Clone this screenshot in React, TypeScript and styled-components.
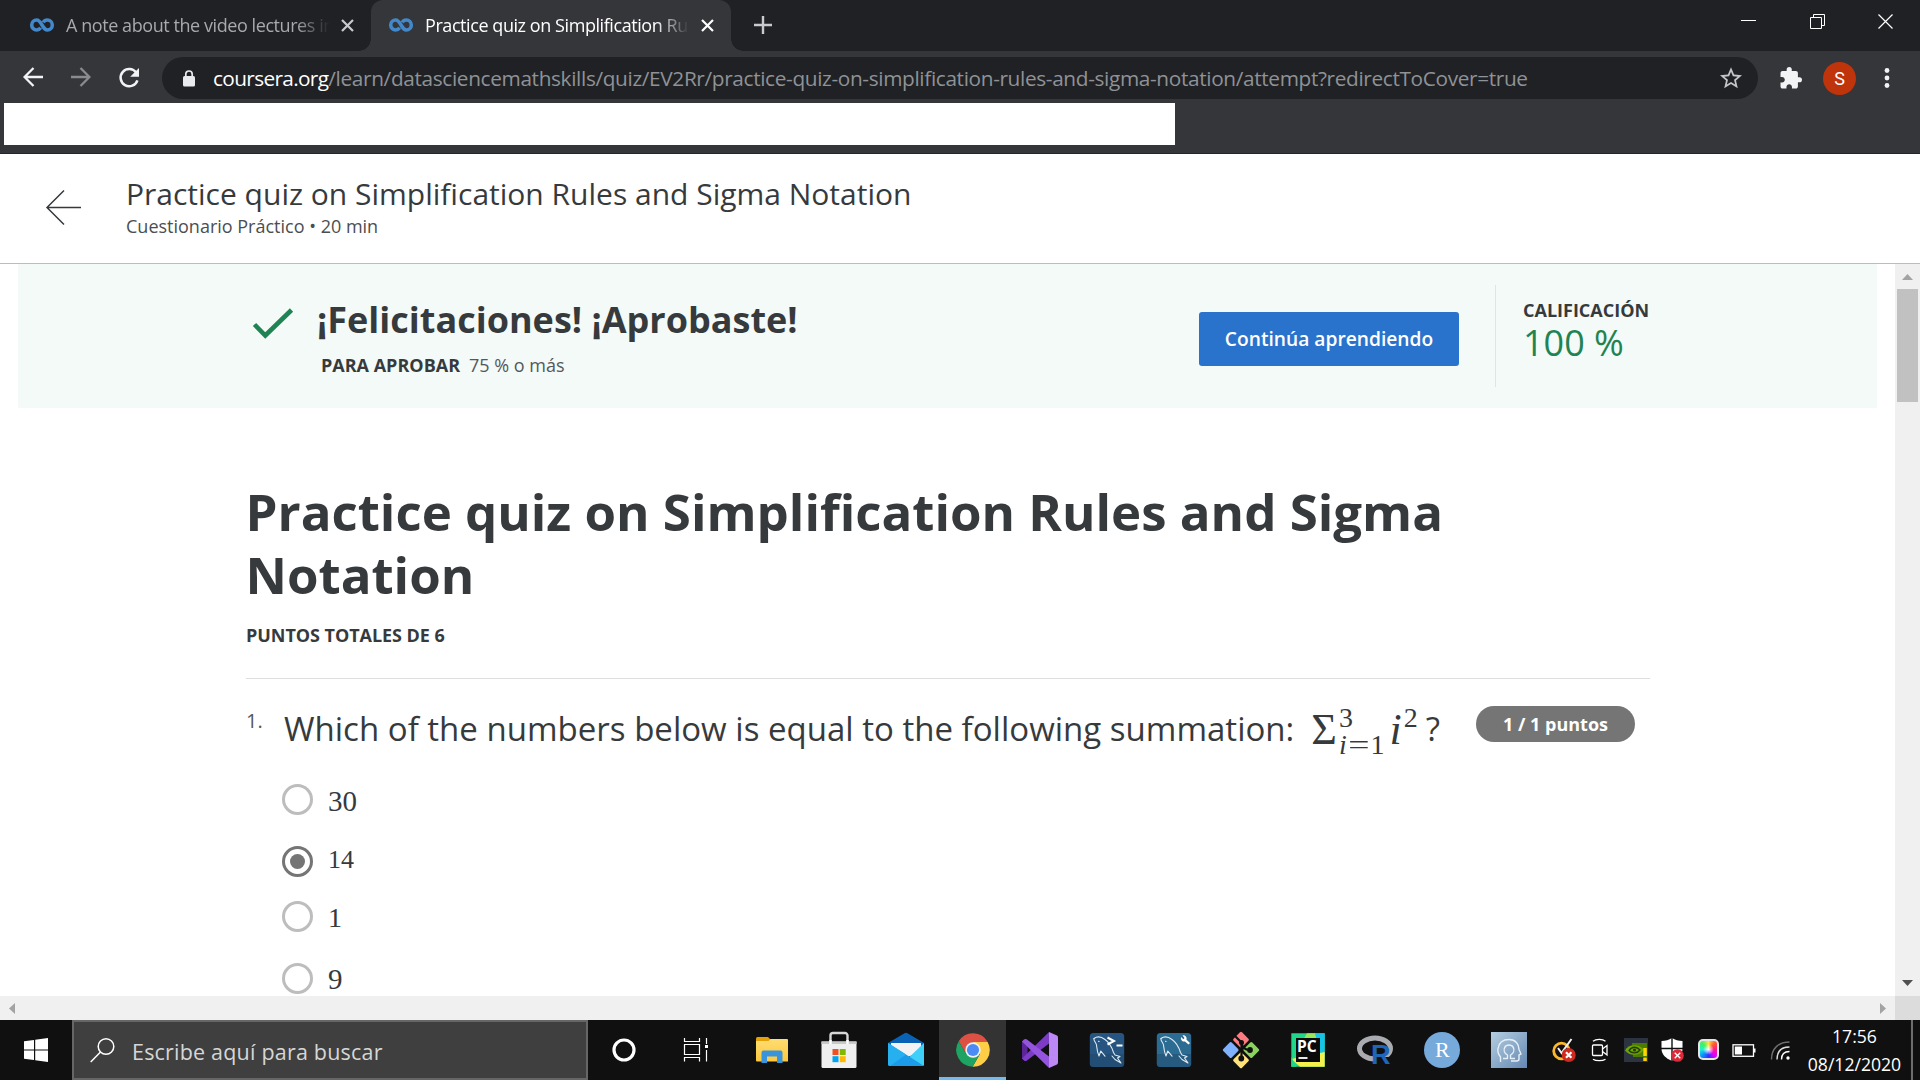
import React from 'react';
import styled, { createGlobalStyle } from 'styled-components';

const ui = "'Open Sans', 'Noto Sans', sans-serif";
const math = "'Liberation Serif', 'Times New Roman', serif";
const ink = '#373a3c';

const GlobalStyle = createGlobalStyle`
  * { box-sizing: border-box; }
  html, body { margin: 0; padding: 0; overflow: hidden; }
  body { font-family: ${ui}; color: ${ink}; background: #fff; }
`;

const Screen = styled.div`
  width: 1920px;
  height: 1080px;
  display: flex;
  flex-direction: column;
  overflow: hidden;
`;

const Icon = styled.svg`
  display: block;
  flex: none;
  overflow: visible;
`;

/* ---------- Browser chrome ---------- */

const Browser = styled.header`
  flex: none;
  height: 154px;
  background: #35363a;
  border-bottom: 1px solid #242528;
`;

const TabStrip = styled.div`
  height: 51px;
  display: flex;
  background: #202124;
`;

const Tab = styled.div<{ $active?: boolean }>`
  position: relative;
  width: ${(p) => (p.$active ? 360 : 371)}px;
  height: 51px;
  padding-left: ${(p) => (p.$active ? 18 : 30)}px;
  padding-right: 17px;
  padding-bottom: 1px;
  display: flex;
  align-items: center;
  border-radius: 12px 12px 0 0;
  color: ${(p) => (p.$active ? '#ffffff' : '#a6a9ad')};
  background: ${(p) => (p.$active ? '#35363a' : 'transparent')};

  &::before,
  &::after {
    content: '';
    display: ${(p) => (p.$active ? 'block' : 'none')};
    position: absolute;
    bottom: 0;
    width: 12px;
    height: 12px;
  }
  &::before {
    left: -12px;
    background: radial-gradient(circle at 0 0, transparent 11.5px, #35363a 12px);
  }
  &::after {
    right: -12px;
    background: radial-gradient(circle at 100% 0, transparent 11.5px, #35363a 12px);
  }
`;

const TabTitle = styled.span`
  width: 266px;
  margin-left: 12px;
  overflow: hidden;
  white-space: nowrap;
  font-size: 18px;
  line-height: 24px;
  letter-spacing: -0.43px;
  mask-image: linear-gradient(to right, #000 230px, transparent 264px);
`;

const TabClose = styled(Icon)`
  margin-left: auto;
`;

const NewTab = styled.div`
  width: 64px;
  padding-bottom: 1px;
  display: flex;
  align-items: center;
  justify-content: center;
`;

const WindowControls = styled.div`
  margin-left: auto;
  height: 43px;
  display: grid;
  grid-template-columns: repeat(3, 68.5px);
  align-items: center;
  justify-items: center;
`;

const Toolbar = styled.div`
  height: 52px;
  padding: 6px 23px 4px 23px;
  display: flex;
  align-items: center;
`;

const NavButtons = styled.div`
  width: 139px;
  display: flex;
  gap: 28px;
`;

const Omnibox = styled.div`
  width: 1596px;
  height: 42px;
  padding: 0 16px 0 21px;
  display: flex;
  align-items: center;
  border-radius: 21px;
  background: #202124;
`;

const Url = styled.span`
  flex: 1;
  margin-left: 18px;
  font-size: 20.8px;
  line-height: 28px;
  letter-spacing: -0.35px;
  white-space: nowrap;
  color: #8f9296;
`;

const Host = styled.span`
  color: #fff;
  letter-spacing: -0.65px;
`;

const ToolbarActions = styled.div`
  flex: 1;
  display: flex;
  align-items: center;
  padding-left: 22px;
`;

const Avatar = styled.div`
  width: 33px;
  height: 33px;
  margin: 0 28px 0 21px;
  display: flex;
  align-items: center;
  justify-content: center;
  border-radius: 50%;
  background: #c0340c;
  color: #fff;
  font: 18px Roboto, sans-serif;
`;

const BlankBar = styled.div`
  width: 1171px;
  height: 42px;
  margin-left: 4px;
  background: #fff;
`;

/* ---------- Quiz page ---------- */

const QuizHeader = styled.div`
  flex: none;
  height: 110px;
  padding: 19px 0 0 46px;
  display: flex;
  border-bottom: 1px solid #b9bdbb;
`;

const BackArrow = styled(Icon)`
  margin-top: 17px;
`;

const HeaderText = styled.div`
  margin-left: 45px;
`;

const HeaderTitle = styled.div`
  font-size: 30px;
  line-height: 41px;
`;

const HeaderMeta = styled.div`
  font-size: 18px;
  line-height: 24px;
  color: #4b4e50;
`;

const Viewport = styled.div`
  flex: none;
  height: 732px;
  display: flex;
`;

const Page = styled.main`
  width: 1895px;
  overflow: hidden;
`;

const Banner = styled.section`
  height: 144px;
  margin: 0 18px;
  padding-left: 234px;
  display: flex;
  background: #f3faf8;
`;

const BannerCheck = styled(Icon)`
  margin-top: 43px;
`;

const BannerCopy = styled.div`
  width: 905px;
  padding: 31px 0 0 23px;
`;

const Congrats = styled.h2`
  margin: 0;
  font-size: 36px;
  font-weight: 700;
  line-height: 50px;
`;

const PassLine = styled.p`
  margin: 8px 0 0 4px;
  display: flex;
  gap: 9px;
  font-size: 18px;
  line-height: 24px;
  color: #55585a;
`;

const Label = styled.span`
  font-size: 18px;
  font-weight: 700;
  line-height: 24px;
  color: ${ink};
`;

const ContinueButton = styled.button`
  width: 260px;
  height: 54px;
  margin: 48px 36px 0 0;
  padding: 0;
  border: 0;
  border-radius: 3px;
  background: #2a73cc;
  color: #fff;
  font: 600 19.2px/54px ${ui};
`;

const Grade = styled.div`
  height: 102px;
  margin-top: 21px;
  padding: 13px 0 0 27px;
  display: flex;
  flex-direction: column;
  border-left: 1px solid #dfe5e3;
`;

const GradeValue = styled.span`
  font-size: 36px;
  line-height: 42px;
  color: #1f8354;
`;

const Quiz = styled.section`
  width: 1650px;
  padding: 72px 0 0 246px;
`;

const QuizTitle = styled.h1`
  margin: 0 0 17px -0.5px;
  width: 1300px;
  font-size: 51px;
  font-weight: 700;
  line-height: 63px;
`;

const TotalPoints = styled.div`
  height: 55px;
  letter-spacing: -0.05px;
`;

const Question = styled.div`
  height: 106px;
  padding: 27px 15px 0 0;
  display: flex;
  align-items: flex-start;
  border-top: 1px solid #dedede;
`;

const QuestionNumber = styled.span`
  width: 38px;
  padding-top: 1px;
  font-size: 20px;
  line-height: 28px;
  color: #55585a;
`;

const Prompt = styled.span`
  font-size: 33.04px;
  line-height: 46px;
  white-space: nowrap;
`;

const Formula = styled.span`
  height: 46px;
  margin: 0 7px 0 17px;
  display: flex;
  align-items: flex-start;
  font-family: ${math};
`;

const Symbol = styled.span<{ $italic?: boolean }>`
  padding-top: 1px;
  font-size: 44px;
  line-height: 46px;
  font-style: ${(p) => (p.$italic ? 'italic' : 'normal')};
`;

const Scripts = styled.span<{ $gap: number }>`
  margin: -2px ${(p) => p.$gap}px 0 2px;
  display: flex;
  flex-direction: column;
  font-size: 28px;
  line-height: 27px;
`;

const Lower = styled.span`
  display: flex;
  align-items: baseline;
`;

const Equals = styled.span`
  margin: 0 4px;
  display: inline-block;
  transform: scaleX(1.35);
`;

const PointsPill = styled.span`
  width: 159px;
  height: 36px;
  margin: 0 0 0 auto;
  border-radius: 18px;
  background: #757575;
  color: #fff;
  font-size: 18px;
  font-weight: 700;
  line-height: 37px;
  text-align: center;
`;

const Options = styled.div`
  padding-left: 36px;
`;

const Option = styled.label<{ $gap: number }>`
  height: 31px;
  margin-bottom: ${(p) => p.$gap}px;
  display: flex;
  align-items: center;
  gap: 15px;
`;

const Radio = styled.span<{ $on?: boolean }>`
  width: 31px;
  height: 31px;
  display: flex;
  align-items: center;
  justify-content: center;
  border: 3px solid ${(p) => (p.$on ? '#757575' : '#bdbdbd')};
  border-radius: 50%;

  &::after {
    content: '';
    width: 15px;
    height: 15px;
    border-radius: 50%;
    background: ${(p) => (p.$on ? '#757575' : 'transparent')};
  }
`;

const Answer = styled.span<{ $size: number; $shift: number }>`
  padding-top: ${(p) => Math.max(0, p.$shift)}px;
  padding-bottom: ${(p) => Math.max(0, -p.$shift)}px;
  font-family: ${math};
  font-size: ${(p) => p.$size}px;
  line-height: 30px;
`;

/* ---------- Scrollbars ---------- */

const VerticalBar = styled.div`
  width: 25px;
  padding: 10px 0;
  display: flex;
  flex-direction: column;
  align-items: center;
  justify-content: space-between;
  background: #f0f0f0;
`;

const ThumbGroup = styled.div`
  display: flex;
  flex-direction: column;
  align-items: center;
  gap: 9px;
`;

const Thumb = styled.div`
  width: 21px;
  height: 113px;
  background: #c1c1c1;
`;

const HorizontalBar = styled.div`
  flex: none;
  height: 24px;
  padding-left: 9px;
  display: flex;
  align-items: center;
  background: #f0f0f0;
`;

const BarCorner = styled.div`
  width: 25px;
  height: 24px;
  margin-left: 9px;
  background: #dcdcdc;
`;

const ScrollRight = styled(Icon)`
  margin-left: auto;
`;

/* ---------- Taskbar ---------- */

const Taskbar = styled.footer`
  flex: none;
  height: 60px;
  display: flex;
  background: #101010;
`;

const Slot = styled.div<{ $width: number; $active?: boolean }>`
  width: ${(p) => p.$width}px;
  height: 60px;
  flex: none;
  display: flex;
  align-items: center;
  justify-content: center;
  background: ${(p) => (p.$active ? '#333333' : 'transparent')};
  box-shadow: ${(p) => (p.$active ? 'inset 0 -3px #76b9ed' : 'none')};
`;

const AppRow = styled.div`
  margin-left: 7px;
  display: flex;
`;

const SearchBox = styled.div`
  width: 516px;
  height: 60px;
  padding: 0 0 0 16px;
  display: flex;
  align-items: center;
  gap: 17px;
  border: 2px solid #666;
  background: #3f3f3f;
  color: #d6d6d6;
  font-size: 21.5px;
  letter-spacing: 0.2px;
  white-space: nowrap;
`;

const SearchHint = styled.span`
  padding-top: 3px;
`;

const Tray = styled.div`
  margin-left: 4px;
  display: flex;
`;

const Clock = styled.div`
  width: 113px;
  padding-top: 2px;
  text-align: center;
  color: #fff;
  font-size: 17.6px;
  line-height: 28px;
`;

const ShowDesktop = styled.div`
  width: 8px;
  border-left: 2px solid #6d6d6d;
`;

/* ---------- Icons ---------- */

const Coursera = () => (
  <Icon width="24" height="14" viewBox="0 0 24 14">
    <path
      d="M10.6 9.8C9.6 11.3 8.3 12 6.7 12a5 5 0 1 1 0-10c4.8 0 5.8 10 10.6 10a5 5 0 1 0 0-10c-1.8 0-3.2.9-4 2.3"
      fill="none" stroke="#4288ca" strokeWidth="3.6"
    />
  </Icon>
);

const Cross = ({ color }: { color: string }) => (
  <TabClose width="13" height="13" viewBox="0 0 13 13">
    <path d="M1 1l11 11M12 1L1 12" stroke={color} strokeWidth="2.2" />
  </TabClose>
);

const Arrow = ({ dir, color }: { dir: 'left' | 'right'; color: string }) => (
  <Icon width="20" height="20" viewBox="0 0 20 20">
    <path
      d={dir === 'left' ? 'M20 10H2M10.5 1L1.6 10l8.9 9' : 'M0 10h18M9.5 1l8.9 9-8.9 9'}
      fill="none" stroke={color} strokeWidth="2.3"
    />
  </Icon>
);

const Reload = () => (
  <Icon width="22" height="22" viewBox="1 0 22 22">
    <path d="M18.2 5.6A8.6 8.6 0 1 0 19.4 13.3" fill="none" stroke="#f1f3f4" strokeWidth="2.5" />
    <path d="M21 1v8.8h-8.8z" fill="#f1f3f4" />
  </Icon>
);

const Lock = () => (
  <Icon width="12" height="17" viewBox="0 0 12 17">
    <rect y="6" width="12" height="10.5" rx="1.5" fill="#e8eaed" />
    <path d="M2.8 7V4.2a3.2 3.2 0 0 1 6.4 0V7" fill="none" stroke="#e8eaed" strokeWidth="1.7" />
  </Icon>
);

const Star = () => (
  <Icon width="22" height="22" viewBox="2 2 20 19.5">
    <path
      fill="#c4c7ca"
      d="M22 9.24l-7.19-.62L12 2 9.19 8.63 2 9.24l5.46 4.73L5.82 21 12 17.27 18.18 21l-1.63-7.03L22 9.24zM12 15.4l-3.76 2.27 1-4.28-3.32-2.88 4.38-.38L12 6.1l1.71 4.04 4.38.38-3.32 2.88 1 4.28L12 15.4z"
    />
  </Icon>
);

const Puzzle = () => (
  <Icon width="22" height="22" viewBox="1.5 1 21.5 21.5">
    <path
      fill="#f1f3f4"
      d="M20.5 11H19V7c0-1.1-.9-2-2-2h-4V3.5a2.5 2.5 0 0 0-5 0V5H4c-1.1 0-1.99.9-1.99 2v3.8H3.5c1.49 0 2.7 1.21 2.7 2.7s-1.21 2.7-2.7 2.7H2V20c0 1.1.9 2 2 2h3.8v-1.5c0-1.49 1.21-2.7 2.7-2.7s2.7 1.21 2.7 2.7V22H17c1.1 0 2-.9 2-2v-4h1.5a2.5 2.5 0 0 0 0-5z"
    />
  </Icon>
);

const Dots = () => (
  <Icon width="6" height="20" viewBox="0 0 6 20">
    {[2.5, 10, 17.5].map((y) => <circle key={y} cx="3" cy={y} r="2.4" fill="#f1f3f4" />)}
  </Icon>
);

const Triangle = ({ points, color, w, h }: { points: string; color: string; w: number; h: number }) => (
  <Icon width={w} height={h} viewBox={`0 0 ${w} ${h}`}><polygon points={points} fill={color} /></Icon>
);

const App36 = ({ children }: { children: React.ReactNode }) => (
  <Icon width="36" height="36" viewBox="0 0 36 36">{children}</Icon>
);

const Explorer = () => (
  <App36>
    <path d="M2 6.5A1.5 1.5 0 0 1 3.5 5H14l2.5 2.5V12H2z" fill="#e2a10a" />
    <path d="M2 9h12.500l2-2H33a1 1 0 0 1 1 1v21.500H3a1 1 0 0 1-1-1z" fill="url(#folder)" />
    <path d="M7.500 31V20.500a2 2 0 0 1 2-2h17a2 2 0 0 1 2 2V31h-5.500v-6.500H13V31z" fill="#3a94dc" />
    <defs>
      <linearGradient id="folder" x2="0" y2="1">
        <stop stopColor="#ffdd72" /><stop offset="1" stopColor="#fdc83d" />
      </linearGradient>
    </defs>
  </App36>
);

const Store = () => (
  <App36>
    <path d="M9.500 12V3.500A2.500 2.500 0 0 1 12 1h12a2.500 2.500 0 0 1 2.500 2.500V12" fill="none" stroke="#d8d8d8" strokeWidth="2.4" />
    <path d="M.5 9.500h35V34.500a1.500 1.500 0 0 1-1.500 1.500H2a1.500 1.500 0 0 1-1.500-1.500z" fill="#f0f0f0" />
    <path d="M.5 9.500h35v2.500H.5z" fill="#c9c9c9" />
    <path d="M9.500 8v4M26.500 8v4" stroke="#fff" strokeWidth="2.4" />
    <path d="M11.500 17h6v6h-6z" fill="#f25022" />
    <path d="M18.700 17h6v6h-6z" fill="#7fba00" />
    <path d="M11.500 24.200h6v6h-6z" fill="#00a4ef" />
    <path d="M18.700 24.200h6v6h-6z" fill="#ffb900" />
  </App36>
);

const Mail = () => (
  <App36>
    <path d="M0 11L16.500 1.300a3 3 0 0 1 3 0L36 11v8H0z" fill="#0a62b5" />
    <path d="M3 11h30v8L18 26 3 19z" fill="#f3f3f3" />
    <path d="M36 11v21.500a1.500 1.500 0 0 1-1.500 1.500H12z" fill="#3fd0fa" />
    <path d="M0 11l36 23H1.500A1.500 1.500 0 0 1 0 32.500z" fill="#1c9ce8" />
    <path d="M0 11l18 11.500L2 34 0 32.500z" fill="#27b0f0" />
  </App36>
);

const Chrome = () => (
  <App36>
    <path d="M3.740 9.300A16.700 16.700 0 0 1 32.660 10L18 10 11.070 22z" fill="#dd5144" />
    <path d="M32.660 10A16.700 16.700 0 0 1 17.600 34.700L24.930 22 18 10z" fill="#ffcd46" />
    <path d="M17.600 34.700A16.700 16.700 0 0 1 3.740 9.300L11.070 22h13.860z" fill="#1da362" />
    <circle cx="18" cy="18" r="7.7" fill="#f1f1f1" />
    <circle cx="18" cy="18" r="6.1" fill="#4c8bf5" />
  </App36>
);

const VisualStudio = () => (
  <App36>
    <path d="M0 9.500L3.500 7l2 1.500v19L3.500 29 0 26.500z" fill="#5c2699" />
    <path d="M27 0v11.500L5 28.500q-1.500 1-3 0L0 26.500z" fill="#7c3cc6" />
    <path d="M2 7.500q1.500-1 3 0L27 24.500V36L0 9.500z" fill="#9554dd" />
    <path d="M27 0l8 3.500q1 .6 1 2v25q0 1.400-1 2L27 36z" fill="#bb88f4" />
  </App36>
);

const MySql = ({ kind }: { kind: 'shell' | 'workbench' }) => (
  <App36>
    <rect x=".8" y="1" width="34.4" height="34" rx="3.5" fill={kind === 'shell' ? '#265582' : '#2c6b92'} />
    <path d="M1 22h34v10a3 3 0 0 1-3 3H4a3 3 0 0 1-3-3z" fill="#1c3f5c" opacity=".35" />
    <g fill="none" stroke="#dfeaf2" strokeWidth="1.1" strokeLinejoin="round" strokeLinecap="round">
      <path d="M5 6.500C8 4.300 12 4.500 16 7.500c5 3.500 7 8 8.500 13l1.500 2.500 5 1.500-2.500 1.500 3.500 5-6-3.500-3-3.500" />
      <path d="M5 6.500c-.8 2 2 4 2.500 6.500.4 3 .6 7 2.500 11l1.800-5 4.200 5.200" />
      <path d="M9.500 9.200l.6.300" />
    </g>
    {kind === 'shell' ? (
      <path d="M18.500 5.500l6.500 3.500-6.500 3.500M27.500 13.500h6" fill="none" stroke="#fff" strokeWidth="2" />
    ) : (
      <path d="M25 5a3.500 3.500 0 0 0 4 4.500l3.500 3 1.500-1.500-3.500-3.200A3.300 3.300 0 0 0 26.500 3.500l2 2.500-1 1.300z" fill="#fff" />
    )}
  </App36>
);

const Git = () => (
  <App36>
    <rect x="12" y="1.7" width="12" height="12" rx="1.5" transform="rotate(45 18 7.7)" fill="#ff7b80" />
    <rect x="1.7" y="12" width="12" height="12" rx="1.5" transform="rotate(45 7.7 18)" fill="#7fb1ff" />
    <rect x="22.3" y="12" width="12" height="12" rx="1.5" transform="rotate(45 28.3 18)" fill="#8bd35f" />
    <rect x="12" y="22.3" width="12" height="12" rx="1.5" transform="rotate(45 18 28.3)" fill="#ffe27a" />
    <path d="M11.500 3.500l7 7V26M18.500 10.500c.5 5 3.500 7.500 8.500 7.500" fill="none" stroke="#101010" strokeWidth="2.2" />
    <circle cx="18.5" cy="10.5" r="2.5" fill="#101010" />
    <circle cx="27" cy="18" r="2.9" fill="#101010" />
    <circle cx="18.3" cy="26.5" r="2.9" fill="#101010" />
  </App36>
);

const PyText = styled.text`
  font: 700 15.5px 'Open Sans', sans-serif;
  fill: #fff;
`;

const PyCharm = () => (
  <App36>
    <path d="M1.300 1.300h33.400v33.400H1.300z" fill="#21d789" />
    <path d="M24 1.300h10.700V26L24 12z" fill="#17c4e8" />
    <path d="M17 1.300h8l1.500 6-14 2z" fill="#9be85f" />
    <path d="M34.700 20v14.700H10L1.300 27z" fill="#f5f04a" />
    <path d="M1.300 25l5 9.700h-5z" fill="#21d789" />
    <path d="M6 6h24v24H6z" fill="#0a0a0a" />
    <PyText x="7" y="19.5">PC</PyText>
    <path d="M8.500 25h9v2h-9z" fill="#e8e8e8" />
  </App36>
);

const RText = styled.text<{ $serif?: boolean }>`
  font: ${(p) => (p.$serif ? "22px 'Liberation Serif', serif" : "700 27px 'Liberation Sans', sans-serif")};
  fill: ${(p) => (p.$serif ? '#fff' : '#1f66b9')};
`;

const RLogo = () => (
  <App36>
    <ellipse cx="18" cy="16.5" rx="15.5" ry="10.5" fill="none" stroke="#a9abb0" strokeWidth="5" />
    <path d="M19 29l-2-4h18v9H19z" fill="#101010" />
    <RText x="14" y="31.5">R</RText>
  </App36>
);

const RStudio = () => (
  <App36>
    <circle cx="18" cy="18" r="18" fill="#75aadb" />
    <RText $serif x="11" y="25">R</RText>
  </App36>
);

const HeadApp = () => (
  <App36>
    <defs>
      <linearGradient id="head" x2="1" y2="1">
        <stop stopColor="#b4cee0" /><stop offset="1" stopColor="#6588b2" />
      </linearGradient>
    </defs>
    <path d="M0 0h36v36H0z" fill="url(#head)" />
    <g fill="none" stroke="#e6f0f8" strokeWidth="1.4" strokeLinejoin="round">
      <path d="M9.500 30v-5C7 22 6.500 19.500 7 16.500 8 10.500 12.500 7.500 18 7.500c6.500 0 10 4.500 10 10l2 4.500-2 .8V27c0 1.500-1 2-2.500 2H20" />
      <path d="M12 26.500h4.500V23c-3-1.600-4.200-4.800-2.800-7.600 1.700-3.200 6.900-3.200 8.600 0 1.400 2.800.2 6-2.800 7.600v3.500H24" />
    </g>
  </App36>
);

const Norton = () => (
  <Icon width="24" height="24" viewBox="0 0 24 24">
    <circle cx="9.5" cy="13" r="7.8" fill="none" stroke="#fcb72b" strokeWidth="2.8" />
    <path d="M6 10l3.500 5L19.500 1" fill="none" stroke="#f2f2f2" strokeWidth="2" />
    <circle cx="16.7" cy="17" r="7" fill="#cf2a20" />
    <path d="M14 14.300l5.400 5.400M19.400 14.300L14 19.700" stroke="#fff" strokeWidth="2.2" />
  </Icon>
);

const Camera = () => (
  <Icon width="24" height="24" viewBox="0 0 24 24">
    <g fill="none" stroke="#fff" strokeWidth="1.3">
      <rect x="4.5" y="7" width="10" height="10.5" rx="1" />
      <path d="M14.500 11l4.500-3.500v9.500l-4.500-3.500M5 3.200C8 .7 14.500.7 17.500 3.200M5 21.200c3 2 9.500 2 12.500 0" />
    </g>
  </Icon>
);

const Nvidia = () => (
  <Icon width="24" height="24" viewBox="0 0 24 24">
    <path d="M0 0h24v24H0z" fill="#2b3440" />
    <path d="M8 5h15v14H9z" fill="#4d7a00" />
    <path d="M1 12.500C4 6.500 14 5 20 12c-5 6.500-15 6-19 .5z" fill="#6aa800" />
    <path d="M5 12.500c3-4.500 8-4 11-.5-2.500 3.500-8 4-11 .5z" fill="none" stroke="#27380a" strokeWidth="1.3" />
    <circle cx="10.5" cy="12" r="1.5" fill="#27380a" />
    <path d="M19.300 10h3.500v8h-3.500zM19.300 19.500h3.500V23h-3.500z" fill="#ffd500" />
  </Icon>
);

const Shield = () => (
  <Icon width="24" height="24" viewBox="0 0 24 24">
    <path d="M12 0c3 2 6.500 3 10.500 3v7.500c0 6-4 9.500-10.500 12.500C5.500 20 1.500 16.500 1.500 10.500V3C5.500 3 9 2 12 0z" fill="#fff" />
    <path d="M12 0v23M1 10.500h22" stroke="#101010" strokeWidth="1.4" />
    <circle cx="17.5" cy="17.5" r="6.3" fill="#d92b3a" />
    <path d="M14.700 14.700l5.600 5.600M20.300 14.700l-5.600 5.600" stroke="#fff" strokeWidth="1.3" />
  </Icon>
);

const Swatch = styled.div`
  width: 21px;
  height: 21px;
  margin-top: -2px;
  border: 2px solid #e4e4e4;
  border-radius: 5px;
  background:
    radial-gradient(circle at 50% 50%, #fff 0, transparent 45%),
    conic-gradient(from 0deg, #ffe14a, #ff5a30, #ff1a8c, #e000ff, #3030ff, #1090ff, #20f0d0, #40f060, #ffe14a);
`;

const Battery = () => (
  <Icon width="24" height="24" viewBox="0 0 24 24">
    <rect x="1" y="6.8" width="20.5" height="11.5" fill="none" stroke="#fff" strokeWidth="1.3" />
    <path d="M2.800 8.500H10v8H2.800zM22 10.500h1.500v4H22z" fill="#fff" />
  </Icon>
);

const Wifi = () => (
  <Icon width="24" height="24" viewBox="0 0 24 24">
    <circle cx="20" cy="20" r="1.7" fill="#fff" />
    <g fill="none" strokeWidth="1.4">
      <path d="M13.500 21.500c0-5 3-8 8-8" stroke="#fff" />
      <path d="M9 21.500C9 13.500 13.500 9 21.500 9" stroke="#ddd" />
      <path d="M3.500 21.500C3.500 10.500 10.500 4 21.500 4" stroke="#707070" />
    </g>
  </Icon>
);

const options = [
  { text: '30', size: 29, shift: 2, gap: 31 },
  { text: '14', size: 26, shift: -4, gap: 24 },
  { text: '1', size: 28, shift: 3, gap: 31 },
  { text: '9', size: 29, shift: 1, gap: 0 },
];

const apps = [
  <Explorer />, <Store />, <Mail />, <Chrome />, <VisualStudio />, <MySql kind="shell" />,
  <MySql kind="workbench" />, <Git />, <PyCharm />, <RLogo />, <RStudio />, <HeadApp />,
];

const tray = [<Norton />, <Camera />, <Nvidia />, <Shield />, <Swatch />, <Battery />, <Wifi />];

export default function App() {
  return (
    <Screen>
      <GlobalStyle />
      <Browser>
        <TabStrip>
          <Tab>
            <Coursera />
            <TabTitle>A note about the video lectures in</TabTitle>
            <Cross color="#c8cacd" />
          </Tab>
          <Tab $active>
            <Coursera />
            <TabTitle>Practice quiz on Simplification Ru</TabTitle>
            <Cross color="#ffffff" />
          </Tab>
          <NewTab>
            <Icon width="18" height="18" viewBox="0 0 18 18">
              <path d="M9 0v18M0 9h18" stroke="#c8cacd" strokeWidth="2.4" />
            </Icon>
          </NewTab>
          <WindowControls>
            <Icon width="15" height="15" viewBox="0 0 15 15"><path d="M0 6.500h15" stroke="#fff" /></Icon>
            <Icon width="15" height="15" viewBox="0 0 15 15">
              <path d="M.5 3.500h11v11H.5zM3.500 3.500v-3h11v11h-3" fill="none" stroke="#fff" />
            </Icon>
            <Icon width="15" height="15" viewBox="0 0 15 15">
              <path d="M.5.5l14 14M14.500.5l-14 14" stroke="#fff" strokeWidth="1.2" />
            </Icon>
          </WindowControls>
        </TabStrip>
        <Toolbar>
          <NavButtons>
            <Arrow dir="left" color="#f1f3f4" />
            <Arrow dir="right" color="#8a8b8e" />
            <Reload />
          </NavButtons>
          <Omnibox>
            <Lock />
            <Url>
              <Host>coursera.org</Host>
              /learn/datasciencemathskills/quiz/EV2Rr/practice-quiz-on-simplification-rules-and-sigma-notation/attempt?redirectToCover=true
            </Url>
            <Star />
          </Omnibox>
          <ToolbarActions>
            <Puzzle />
            <Avatar>S</Avatar>
            <Dots />
          </ToolbarActions>
        </Toolbar>
        <BlankBar />
      </Browser>

      <QuizHeader>
        <BackArrow width="35" height="35" viewBox="0 0 35 35">
          <path d="M35 17.500H1M18 .5L1 17.500l17 17" fill="none" stroke={ink} strokeWidth="1.5" />
        </BackArrow>
        <HeaderText>
          <HeaderTitle>Practice quiz on Simplification Rules and Sigma Notation</HeaderTitle>
          <HeaderMeta>Cuestionario Práctico • 20 min</HeaderMeta>
        </HeaderText>
      </QuizHeader>

      <Viewport>
        <Page>
          <Banner>
            <BannerCheck width="42" height="32" viewBox="0 0 42 32">
              <path d="M2.500 17.500l10.800 11L39.500 3" fill="none" stroke="#1f8354" strokeWidth="4.6" />
            </BannerCheck>
            <BannerCopy>
              <Congrats>¡Felicitaciones! ¡Aprobaste!</Congrats>
              <PassLine><Label>PARA APROBAR</Label>75 % o más</PassLine>
            </BannerCopy>
            <ContinueButton>Continúa aprendiendo</ContinueButton>
            <Grade>
              <Label>CALIFICACIÓN</Label>
              <GradeValue>100 %</GradeValue>
            </Grade>
          </Banner>
          <Quiz>
            <QuizTitle>Practice quiz on Simplification Rules and Sigma Notation</QuizTitle>
            <TotalPoints><Label>PUNTOS TOTALES DE 6</Label></TotalPoints>
            <Question>
              <QuestionNumber>1.</QuestionNumber>
              <Prompt>Which of the numbers below is equal to the following summation:</Prompt>
              <Formula>
                <Symbol>Σ</Symbol>
                <Scripts $gap={5}><span>3</span><Lower><i>i</i><Equals>=</Equals>1</Lower></Scripts>
                <Symbol $italic>i</Symbol>
                <Scripts $gap={1}><span>2</span></Scripts>
              </Formula>
              <Prompt>?</Prompt>
              <PointsPill>1 / 1 puntos</PointsPill>
            </Question>
            <Options>
              {options.map((o) => (
                <Option key={o.text} $gap={o.gap}>
                  <Radio $on={o.text === '14'} />
                  <Answer $size={o.size} $shift={o.shift}>{o.text}</Answer>
                </Option>
              ))}
            </Options>
          </Quiz>
        </Page>
        <VerticalBar>
          <ThumbGroup>
            <Triangle points="0,6 5.5,0 11,6" color="#a3a3a3" w={11} h={6} />
            <Thumb />
          </ThumbGroup>
          <Triangle points="0,0 11,0 5.5,6" color="#505050" w={11} h={6} />
        </VerticalBar>
      </Viewport>
      <HorizontalBar>
        <Triangle points="6,0 6,11 0,5.5" color="#a3a3a3" w={6} h={11} />
        <ScrollRight width="6" height="11" viewBox="0 0 6 11"><polygon points="0,0 6,5.5 0,11" fill="#a3a3a3" /></ScrollRight>
        <BarCorner />
      </HorizontalBar>

      <Taskbar>
        <Slot $width={72}>
          <Icon width="24" height="24" viewBox="0 0 24 24">
            <path d="M0 3.300l10-1.400v9.500H0zM11.200 1.700L24 0v11.400H11.200zM0 12.600h10v9.500L0 20.700zM11.200 12.600H24V24l-12.800-1.700z" fill="#fff" />
          </Icon>
        </Slot>
        <SearchBox>
          <Icon width="25" height="25" viewBox="0 0 25 25">
            <circle cx="16" cy="8.5" r="7.8" fill="none" stroke="#fff" strokeWidth="1.5" />
            <path d="M10.500 14L.7 24" stroke="#fff" strokeWidth="1.5" />
          </Icon>
          <SearchHint>Escribe aquí para buscar</SearchHint>
        </SearchBox>
        <Slot $width={72}>
          <Icon width="24" height="24" viewBox="0 0 24 24">
            <circle cx="12" cy="12" r="10" fill="none" stroke="#fff" strokeWidth="3.2" />
          </Icon>
        </Slot>
        <Slot $width={71}>
          <Icon width="24" height="24" viewBox="0 0 24 24">
            <path
              d="M.5 0v3.500h15V0M.5 6.500h15v10H.5zM.5 23.500v-4h15v4M22.500 0v6M22.500 12v11.500"
              fill="none" stroke="#fff" strokeWidth="1.2"
            />
            <path d="M21 7h3v3h-3z" fill="#fff" />
          </Icon>
        </Slot>
        <AppRow>
          {apps.map((app, i) => <Slot key={i} $width={67} $active={i === 3}>{app}</Slot>)}
        </AppRow>
        <Tray>
          {tray.map((item, i) => <Slot key={i} $width={36}>{item}</Slot>)}
        </Tray>
        <Clock>17:56<br />08/12/2020</Clock>
        <ShowDesktop />
      </Taskbar>
    </Screen>
  );
}
